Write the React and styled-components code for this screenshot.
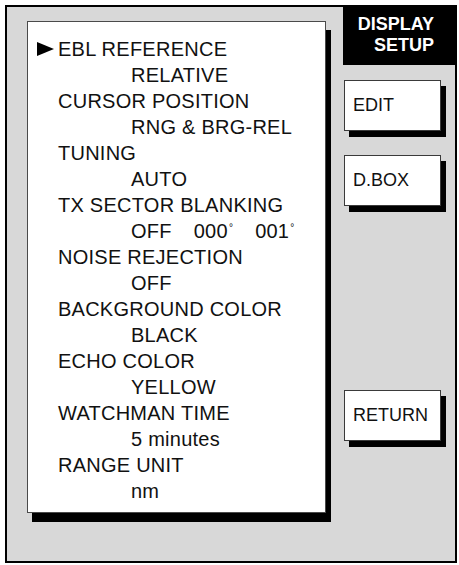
import React from 'react'
import styled, { createGlobalStyle } from 'styled-components'

const GlobalStyle = createGlobalStyle`
  html, body {
    margin: 0;
    padding: 0;
    background: #ffffff;
  }
  body {
    font-family: 'Liberation Sans', Arial, sans-serif;
    color: #111;
  }
`

const Frame = styled.div`
  box-sizing: border-box;
  margin: 5px 0 0 5px;
  width: 452px;
  height: 558px;
  border: 2px solid #000;
  background: #d8d8d8;
  display: flex;
  align-items: flex-start;
  gap: 12px;
`

/* box and its hard shadow share one grid cell; the shadow block is shifted by dx/dy */
const Lifted = styled.div`
  display: grid;
  margin: ${p => p.$margin};

  & > * {
    grid-area: 1 / 1;
  }
`

const Shade = styled.div`
  margin: ${p => p.$dy}px 0 0 ${p => p.$dx}px;
  background: #000;
`

const MenuPanel = styled.div`
  box-sizing: border-box;
  width: 299px;
  height: 492px;
  margin: 0 ${p => p.$dx}px ${p => p.$dy}px 0;
  padding: 14px 0 0 9px;
  background: #fff;
  border: 1px solid #4a4a4a;
  font-size: 20px;
  letter-spacing: 0.25px;
  line-height: 26px;
`

const Row = styled.div`
  display: grid;
  grid-template-columns: 21px 1fr;
  align-items: center;
  height: 26px;
  white-space: nowrap;
`

const Marker = styled.svg`
  width: 17px;
  height: 14px;
  margin-top: -1px;
`

const Value = styled.div`
  grid-column: 2;
  padding-left: 73px;
  display: flex;
  column-gap: ${p => p.$gap || 0}px;
`

const Deg = styled.span`
  position: relative;
  top: -7px;
  font-size: 10px;
  margin-left: 1px;
`

const Side = styled.div`
  width: 112px;
  display: flex;
  flex-direction: column;
  align-items: flex-start;
`

const Title = styled.div`
  box-sizing: border-box;
  width: 114px;
  height: 60px;
  margin-top: -2px;
  padding-right: 23px;
  background: #000;
  color: #fff;
  font-weight: bold;
  font-size: 18px;
  line-height: 21px;
  text-align: right;
  display: flex;
  flex-direction: column;
  justify-content: center;
  align-items: flex-end;
`

const SoftKey = styled.div`
  box-sizing: border-box;
  width: 97px;
  height: 51px;
  margin: 0 ${p => p.$dx}px ${p => p.$dy}px 0;
  padding-left: 8px;
  background: #fff;
  border: 1px solid #3a3a3a;
  font-size: 18px;
  display: flex;
  align-items: center;
`

const menu = [
  { label: 'EBL REFERENCE', value: 'RELATIVE', selected: true },
  { label: 'CURSOR POSITION', value: 'RNG & BRG-REL' },
  { label: 'TUNING', value: 'AUTO' },
  { label: 'TX SECTOR BLANKING', value: ['OFF', '000', '001'] },
  { label: 'NOISE REJECTION', value: 'OFF' },
  { label: 'BACKGROUND COLOR', value: 'BLACK' },
  { label: 'ECHO COLOR', value: 'YELLOW' },
  { label: 'WATCHMAN TIME', value: '5 minutes' },
  { label: 'RANGE UNIT', value: 'nm' },
]

const keys = [
  { label: 'EDIT', top: 15 },
  { label: 'D.BOX', top: 18 },
  { label: 'RETURN', top: 178 },
]

function MenuItem({ label, value, selected }) {
  return (
    <>
      <Row>
        {selected ? (
          <Marker viewBox="0 0 17 14">
            <polygon points="0,0 17,7 0,14" fill="#000" />
          </Marker>
        ) : <span />}
        <span>{label}</span>
      </Row>
      <Row>
        {Array.isArray(value) ? (
          <Value $gap={22}>
            <span>{value[0]}</span>
            <span>{value[1]}<Deg>°</Deg></span>
            <span>{value[2]}<Deg>°</Deg></span>
          </Value>
        ) : (
          <Value>{value}</Value>
        )}
      </Row>
    </>
  )
}

export default function App() {
  return (
    <>
      <GlobalStyle />
      <Frame>
        <Lifted $margin="14px 0 0 20px">
          <Shade $dx={5} $dy={9} />
          <MenuPanel $dx={5} $dy={9}>
            {menu.map(item => (
              <MenuItem key={item.label} {...item} />
            ))}
          </MenuPanel>
        </Lifted>
        <Side>
          <Title>
            <span>DISPLAY</span>
            <span>SETUP</span>
          </Title>
          {keys.map(k => (
            <Lifted key={k.label} $margin={`${k.top}px 0 0 1px`}>
              <Shade $dx={5} $dy={6} />
              <SoftKey $dx={5} $dy={6}>{k.label}</SoftKey>
            </Lifted>
          ))}
        </Side>
      </Frame>
    </>
  )
}
